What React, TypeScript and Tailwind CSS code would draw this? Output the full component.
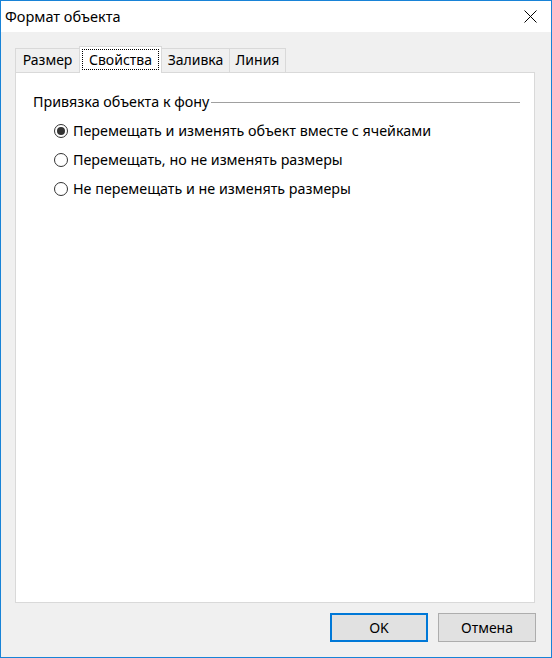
const tabs = [
  { label: "Размер", width: "w-[65px]" },
  { label: "Свойства", width: "w-[83px]" },
  { label: "Заливка", width: "w-[69px]" },
  { label: "Линия", width: "w-[57px]" },
];

const options = [
  "Перемещать и изменять объект вместе с ячейками",
  "Перемещать, но не изменять размеры",
  "Не перемещать и не изменять размеры",
];

function Radio({ checked }: { checked: boolean }) {
  return (
    <span className="flex h-[14px] w-[14px] shrink-0 items-center justify-center rounded-full border border-[#333333] bg-white">
      {checked && <span className="h-[8px] w-[8px] rounded-full bg-[#333333]" />}
    </span>
  );
}

export default function App() {
  const active = 1;

  return (
    <div
      className="flex h-[658px] w-[552px] flex-col border border-[#1883d7] bg-[#f0f0f0] text-[14px] text-black"
      style={{ fontFamily: '"Noto Sans", "Liberation Sans", sans-serif' }}
    >
      {/* Title bar */}
      <div className="flex h-[31px] items-center justify-between bg-white pl-[4px] pr-[14px]">
        <span className="text-[14.5px] leading-none">Формат объекта</span>
        <svg width="13" height="13" viewBox="0 0 13 13" className="text-black">
          <path d="M0.5 0.5 L12.5 12.5 M12.5 0.5 L0.5 12.5" stroke="currentColor" strokeWidth="1" />
        </svg>
      </div>

      {/* Body */}
      <div className="flex flex-1 flex-col pl-[14px] pr-[16px] pt-[14px] pb-[15px]">
        {/* Tabs */}
        <div className="relative z-10 -mb-px flex items-end">
          {tabs.map((t, i) =>
            i === active ? (
              <div
                key={t.label}
                className={`${t.width} -ml-px flex h-[27px] shrink-0 border border-b-0 border-[#d9d9d9] bg-white px-[2px] pt-[2px] pb-[3px]`}
              >
                <div className="flex flex-1 items-center justify-center border border-dotted border-black leading-none">
                  {t.label}
                </div>
              </div>
            ) : (
              <div
                key={t.label}
                className={`${t.width} ${i === 0 ? "" : "-ml-px"} flex h-[25px] shrink-0 items-center justify-center border border-[#d9d9d9] bg-[#f0f0f0] pb-[1px] leading-none`}
              >
                {t.label}
              </div>
            )
          )}
        </div>

        {/* Panel */}
        <div className="flex-1 border border-[#d9d9d9] bg-white pl-[17px] pr-[14px] pt-[19px] text-[14.3px]">
          <div className="flex items-center gap-[2px]">
            <span className="leading-[20px]">Привязка объекта к фону</span>
            <div className="h-px flex-1 bg-[#a0a0a0]" />
          </div>
          <div className="mt-[9px] flex flex-col gap-[9px] pl-[21px]">
            {options.map((o, i) => (
              <label key={o} className="flex h-[20px] items-center gap-[5px]">
                <Radio checked={i === 0} />
                <span className="leading-none">{o}</span>
              </label>
            ))}
          </div>
        </div>

        {/* Buttons */}
        <div className="-mr-px mt-[10px] flex justify-end gap-[10px]">
          <button className="flex h-[29px] w-[98px] items-center justify-center border-2 border-[#0078d7] bg-[#e1e1e1] leading-none">
            OK
          </button>
          <button className="flex h-[29px] w-[98px] items-center justify-center border border-[#adadad] bg-[#e1e1e1] leading-none">
            Отмена
          </button>
        </div>
      </div>
    </div>
  );
}
